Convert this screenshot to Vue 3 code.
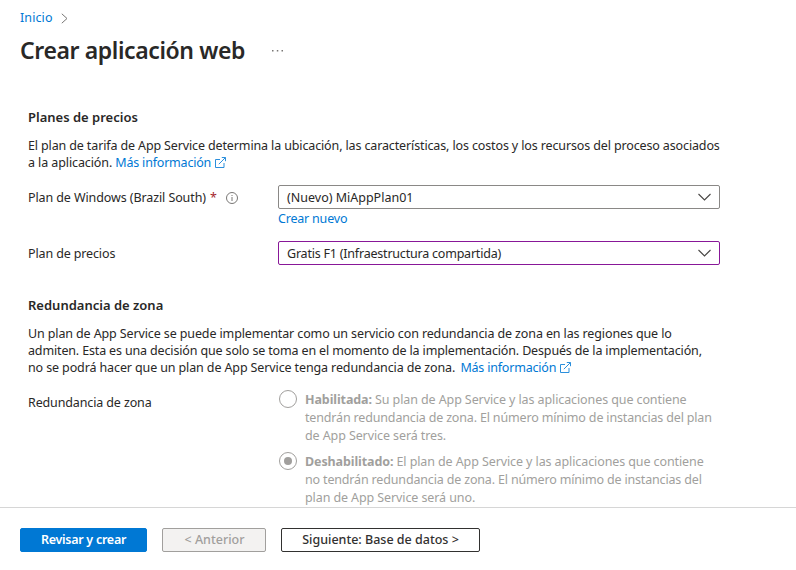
<script setup>
import { ref } from 'vue'

const zone = ref('off')
const options = [
  {
    id: 'on',
    label: 'Habilitada:',
    lines: [
      'Su plan de App Service y las aplicaciones que contiene',
      'tendrán redundancia de zona. El número mínimo de instancias del plan',
      'de App Service será tres.'
    ]
  },
  {
    id: 'off',
    label: 'Deshabilitado:',
    lines: [
      'El plan de App Service y las aplicaciones que contiene',
      'no tendrán redundancia de zona. El número mínimo de instancias del',
      'plan de App Service será uno.'
    ]
  }
]
</script>

<template>
  <div class="page">
    <header class="head">
      <nav class="crumbs">
        <a class="link home">Inicio</a>
        <svg class="crumb-sep" width="7" height="11" viewBox="0 0 7 11"><path d="M.8.8l5.200 4.700L.8 10.200" /></svg>
      </nav>
      <div class="title-row">
        <h1>Crear aplicación web</h1>
        <svg class="more" width="12" height="2" viewBox="0 0 12 2"><path d="M0 0h1.500v1.500H0zM4.800 0h1.500v1.500H4.800zM9.500 0H11v1.500H9.500z" /></svg>
      </div>
    </header>

    <main class="body">
      <h2 class="h-plans">Planes de precios</h2>
      <p class="para">
        <span class="line l1">El plan de tarifa de App Service determina la ubicación, las características, los costos y los recursos del proceso asociados</span>
        <span class="line l2">a la aplicación. <a class="link more-info">Más información</a><svg class="ext" width="11" height="11" viewBox="0 0 11 11"><path d="M5 2.500H.5v8h8.500V6M3.800 7.200L10.400.6M6.800.5h3.700v3.700" /></svg></span>
      </p>

      <div class="row">
        <label class="label">
          <span class="lb1">Plan de Windows (Brazil South)</span><span class="star">*</span>
          <svg class="info" width="12" height="12" viewBox="0 0 12 12"><circle cx="6" cy="6" r="5.500" /><path d="M6 5v4M6 3v1" /></svg>
        </label>
        <div class="field">
          <div class="select">
            <span class="v1">(Nuevo) MiAppPlan01</span>
            <svg class="chev" width="13" height="8" viewBox="0 0 13 8"><path d="M.5 1l6 6 6-6" /></svg>
          </div>
          <a class="link create">Crear nuevo</a>
        </div>
      </div>

      <div class="row row-price">
        <label class="label"><span class="lb2">Plan de precios</span></label>
        <div class="field">
          <div class="select dirty">
            <span class="v2">Gratis F1 (Infraestructura compartida)</span>
            <svg class="chev" width="13" height="8" viewBox="0 0 13 8"><path d="M.5 1l6 6 6-6" /></svg>
          </div>
        </div>
      </div>

      <h2 class="h-zone">Redundancia de zona</h2>
      <p class="para">
        <span class="line l3">Un plan de App Service se puede implementar como un servicio con redundancia de zona en las regiones que lo</span>
        <span class="line l4">admiten. Esta es una decisión que solo se toma en el momento de la implementación. Después de la implementación,</span>
        <span class="line l5">no se podrá hacer que un plan de App Service tenga redundancia de zona. <a class="link more-info gap">Más información</a><svg class="ext" width="11" height="11" viewBox="0 0 11 11"><path d="M5 2.500H.5v8h8.500V6M3.800 7.200L10.400.6M6.800.5h3.700v3.700" /></svg></span>
      </p>

      <div class="row row-zone">
        <label class="label"><span class="lb3">Redundancia de zona</span></label>
        <div class="radios">
          <div v-for="o in options" :key="o.id" class="radio" :class="o.id">
            <span class="ring"><i v-if="zone === o.id" class="dot"></i></span>
            <div class="rtext">
              <span class="line r1"><b>{{ o.label }}</b> <span class="first">{{ o.lines[0] }}</span></span>
              <span class="line r2">{{ o.lines[1] }}</span>
              <span class="line r3">{{ o.lines[2] }}</span>
            </div>
          </div>
        </div>
      </div>
    </main>

    <footer class="foot">
      <button class="btn primary">Revisar y crear</button>
      <button class="btn disabled">&lt; Anterior</button>
      <button class="btn next">Siguiente: Base de datos &gt;</button>
    </footer>
  </div>
</template>

<style>
body { background: #fff; overflow: hidden; }
</style>

<style scoped>
* { box-sizing: border-box; }
.page {
  display: flex;
  flex-direction: column;
  width: 796px;
  height: 570px;
  overflow: hidden;
  background: #fff;
  color: #292827;
  font-family: "Noto Sans", "Open Sans", sans-serif;
  font-size: 12.5px;
  line-height: 17px;
}
.link { color: #0078d4; }
svg { fill: none; flex: none; }
.head { height: 101px; padding: 9px 20px 0; flex: none; }
.crumbs { display: flex; align-items: center; gap: 8px; height: 17px; }
.home { letter-spacing: 0.1px; }
.crumb-sep { stroke: #797775; stroke-width: 1; margin-top: 1px; }
.title-row { display: flex; align-items: center; gap: 27px; margin-top: 8px; height: 32px; }
h1 { margin: 0; font-size: 23px; line-height: 32px; font-weight: 600; white-space: nowrap; letter-spacing: -0.39px; }
.more { fill: #797775; margin-top: 2px; }
.body { flex: none; height: 406px; padding: 8px 0 0 28px; overflow: hidden; }
h2 { margin: 0; font-size: 13px; line-height: 17px; font-weight: 600; }
.para { margin: 11px 0 0; }
.line { display: block; white-space: nowrap; }
.l1 { letter-spacing: -0.131px; }
.l2 { letter-spacing: -0.1px; }
.l3 { letter-spacing: -0.12px; }
.l4 { letter-spacing: -0.15px; }
.l5 { letter-spacing: -0.12px; }
.more-info { letter-spacing: -0.2px; }
.gap { margin-left: 2px; }
.lb1 { letter-spacing: -0.1px; }
.lb2, .lb3 { letter-spacing: -0.13px; }
.v2 { letter-spacing: -0.21px; }
.ext { stroke: #2b8fdc; stroke-width: 1; margin-left: 4px; vertical-align: -1px; }
.row { display: flex; margin-top: 14px; }
.label { display: flex; align-items: center; width: 250px; height: 24px; white-space: nowrap; }
.star { color: #a4262c; margin-left: 4px; }
.info { stroke: #797775; stroke-width: 1; margin: 1px 0 0 9px; }
.field { width: 442px; }
.select {
  display: flex;
  align-items: center;
  justify-content: space-between;
  height: 24px;
  padding: 0 8px;
  border: 1px solid #8a8886;
  border-radius: 2px;
}
.select.dirty { border-color: #881798; }
.chev { stroke: #484644; stroke-width: 1.1; }
.create { display: block; margin-top: 1px; height: 17px; letter-spacing: -0.2px; }
.h-zone { margin-top: 32px; }
.radios { display: flex; flex-direction: column; gap: 7px; color: #a19f9d; line-height: 18px; }
.radio { display: flex; gap: 8px; padding-left: 1px; }
.ring {
  display: flex;
  align-items: center;
  justify-content: center;
  width: 18px;
  height: 18px;
  border: 1px solid #a19f9d;
  border-radius: 50%;
}
.dot { width: 8px; height: 8px; border-radius: 50%; background: #a19f9d; }
.rtext { padding-top: 1px; }
.r1 { letter-spacing: -0.1px; }
.r2 { letter-spacing: -0.163px; }
.r3 { letter-spacing: -0.1px; }
.foot { display: flex; flex: 1; gap: 15px; padding: 20px; border-top: 1px solid #d6d6d6; }
.btn {
  height: 24px;
  padding: 0;
  border: 1px solid #323130;
  border-radius: 2px;
  background: #fff;
  color: #323130;
  font: 500 12.5px/20px "Noto Sans", sans-serif;
  white-space: nowrap;
}
.primary { width: 127px; background: #0078d4; border-color: #0078d4; color: #fff; font-weight: 600; letter-spacing: -0.27px; }
.disabled { width: 104px; background: #f3f2f1; border-color: #a19f9d; color: #a19f9d; padding-left: 1px; }
.next { width: 199px; }
</style>
